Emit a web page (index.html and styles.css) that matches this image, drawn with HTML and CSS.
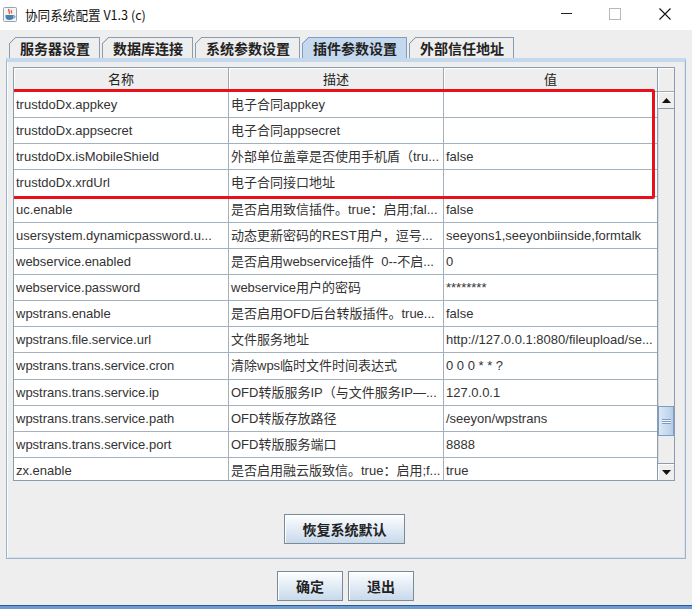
FILE: index.html
```html
<!DOCTYPE html>
<html lang="zh-CN">
<head>
    <meta charset="UTF-8">
    <title>协同系统配置 V1.3 (c)</title>
    <link rel="stylesheet" href="styles.css">
</head>
<body>
    <div class="window">
        <div class="titlebar">
            <svg class="app-icon" width="14" height="15" viewBox="0 0 14 15">
                <rect x="0.5" y="0.5" width="13" height="14" rx="1" fill="#f4f4f4" stroke="#9aa4b0"/>
                <path d="M6 2 C4.5 4 8 5 6 7" stroke="#e2542a" stroke-width="1.4" fill="none"/>
                <path d="M8.5 3 C7.5 4.5 9.5 5 8.5 6.5" stroke="#e2542a" stroke-width="1.1" fill="none"/>
                <path d="M2.5 8 H10.5 V10 C10.5 12 9 13 6.5 13 C4 13 2.5 12 2.5 10 Z" fill="#4a7fb5"/>
                <path d="M10.5 8.6 C12.5 8.6 12.5 11 10.3 11" stroke="#4a7fb5" stroke-width="1" fill="none"/>
            </svg>
            <span class="title-text">协同系统配置 V1.3 (c)</span>
            <div class="controls">
                <span class="ctl ctl-min"></span>
                <span class="ctl ctl-max"></span>
                <svg class="ctl-close" width="12" height="12" viewBox="0 0 12 12">
                    <path d="M0.5 0.5 L11.5 11.5 M11.5 0.5 L0.5 11.5" stroke="#111" stroke-width="1.1"/>
                </svg>
            </div>
        </div>

        <div class="tabs">
            <div class="tab">服务器设置</div>
            <div class="tab">数据库连接</div>
            <div class="tab">系统参数设置</div>
            <div class="tab selected">插件参数设置</div>
            <div class="tab">外部信任地址</div>
        </div>

        <div class="panel">
            <div class="scroll">
                <div class="viewport">
                    <div class="row head">
                        <div class="cell">名称</div>
                        <div class="cell">描述</div>
                        <div class="cell">值</div>
                    </div>
                    <div class="row"><div class="cell">trustdoDx.appkey</div><div class="cell">电子合同appkey</div><div class="cell"></div></div>
                    <div class="row"><div class="cell">trustdoDx.appsecret</div><div class="cell">电子合同appsecret</div><div class="cell"></div></div>
                    <div class="row"><div class="cell">trustdoDx.isMobileShield</div><div class="cell">外部单位盖章是否使用手机盾（tru...</div><div class="cell">false</div></div>
                    <div class="row"><div class="cell">trustdoDx.xrdUrl</div><div class="cell">电子合同接口地址</div><div class="cell"></div></div>
                    <div class="row"><div class="cell">uc.enable</div><div class="cell">是否启用致信插件。true：启用;fal...</div><div class="cell">false</div></div>
                    <div class="row"><div class="cell">usersystem.dynamicpassword.u...</div><div class="cell">动态更新密码的REST用户，逗号...</div><div class="cell">seeyons1,seeyonbiinside,formtalk</div></div>
                    <div class="row"><div class="cell">webservice.enabled</div><div class="cell">是否启用webservice插件&nbsp;&nbsp;0--不启...</div><div class="cell">0</div></div>
                    <div class="row"><div class="cell">webservice.password</div><div class="cell">webservice用户的密码</div><div class="cell">********</div></div>
                    <div class="row"><div class="cell">wpstrans.enable</div><div class="cell">是否启用OFD后台转版插件。true...</div><div class="cell">false</div></div>
                    <div class="row"><div class="cell">wpstrans.file.service.url</div><div class="cell">文件服务地址</div><div class="cell">http://127.0.0.1:8080/fileupload/se...</div></div>
                    <div class="row"><div class="cell">wpstrans.trans.service.cron</div><div class="cell">清除wps临时文件时间表达式</div><div class="cell">0 0 0 * * ?</div></div>
                    <div class="row"><div class="cell">wpstrans.trans.service.ip</div><div class="cell">OFD转版服务IP（与文件服务IP—...</div><div class="cell">127.0.0.1</div></div>
                    <div class="row"><div class="cell">wpstrans.trans.service.path</div><div class="cell">OFD转版存放路径</div><div class="cell">/seeyon/wpstrans</div></div>
                    <div class="row"><div class="cell">wpstrans.trans.service.port</div><div class="cell">OFD转版服务端口</div><div class="cell">8888</div></div>
                    <div class="row"><div class="cell">zx.enable</div><div class="cell">是否启用融云版致信。true：启用;f...</div><div class="cell">true</div></div>

                    <!-- highlight drawn over the first four rows -->
                    <div class="highlight"></div>
                </div>
                <div class="scrollbar">
                    <div class="sb-corner"></div>
                    <div class="sb-btn">
                        <svg width="9" height="5" viewBox="0 0 9 5"><polygon points="0,5 9,5 4.5,0" fill="#111"/></svg>
                    </div>
                    <div class="sb-track">
                        <div class="sb-thumb">
                            <span class="grip"></span>
                        </div>
                    </div>
                    <div class="sb-btn down">
                        <svg width="9" height="5" viewBox="0 0 9 5"><polygon points="0,0 9,0 4.5,5" fill="#111"/></svg>
                    </div>
                </div>
            </div>

            <div class="panel-actions">
                <button class="btn btn-reset">恢复系统默认</button>
            </div>
        </div>

        <div class="actions">
            <button class="btn btn-small">确定</button>
            <button class="btn btn-small">退出</button>
        </div>

        <div class="frame-bottom"></div>
    </div>
</body>
</html>
```

FILE: styles.css
```css
body {
    margin: 0;
    background-color: #eeeeee;
    font-family: "Liberation Sans", Arial, "Noto Sans CJK SC", sans-serif;
    color: #333;
}
.window {
    width: 692px;
    height: 609px;
    overflow: hidden;
    display: flex;
    flex-direction: column;
}

/* title bar */
.titlebar {
    height: 30px;
    background-color: #fff;
    display: flex;
    align-items: center;
    padding-left: 3px;
    flex-shrink: 0;
}
.app-icon {
    margin-top: -1px;
}
.title-text {
    margin-left: 8px;
    font-family: "Noto Sans CJK SC", "Liberation Sans", sans-serif;
    font-size: 12.6px;
    color: #111;
    margin-top: -2px;
}
.controls {
    margin-left: auto;
    display: flex;
    align-items: center;
    margin-top: -3px;
}
.ctl-min {
    width: 11px;
    height: 1px;
    background-color: #222;
    margin-right: 37px;
}
.ctl-max {
    width: 10px;
    height: 10px;
    border: 1px solid #b8b8b8;
    margin-right: 38px;
}
.ctl-close {
    margin-right: 21px;
}

/* tabs */
.tabs {
    display: flex;
    gap: 2px;
    margin-top: 7px;
    padding-left: 9px;
    height: 21px;
    flex-shrink: 0;
}
.tab {
    position: relative;
    padding: 0 9px 0 10px;
    border: 1px solid #8a9cb0;
    border-bottom: none;
    background-color: #eeeeee;
    font-family: "Noto Sans CJK SC", sans-serif;
    font-weight: bold;
    font-size: 14px;
    line-height: 20px;
    color: #222;
    white-space: nowrap;
}
.tab::before {
    content: "";
    position: absolute;
    top: -1px;
    left: -1px;
    width: 7px;
    height: 7px;
    background: linear-gradient(to bottom right, #eeeeee calc(50% - 0.8px), #8a9cb0 50%, transparent calc(50% + 0.8px));
}
.tab.selected {
    background-color: #c5d9ee;
    border-color: #7d9cc6;
}
.tab.selected::before {
    background: linear-gradient(to bottom right, #eeeeee calc(50% - 0.8px), #7d9cc6 50%, transparent calc(50% + 0.8px));
}

/* content panel */
.panel {
    margin-left: 6px;
    width: 680px;
    height: 501px;
    box-sizing: border-box;
    border: 1px solid #9fb4cc;
    border-top: 4px solid #c5d9ee;
    box-shadow: inset 1px 0 0 #f8fbff, inset -1px -1px 0 #d6e2ee;
    padding: 5px 0 0 6px;
    flex-shrink: 0;
}
.scroll {
    width: 662px;
    height: 414px;
    box-sizing: border-box;
    border: 1px solid #8c9cad;
    display: flex;
    overflow: hidden;
}
.viewport {
    position: relative;
    width: 644px;
    overflow: hidden;
    background-color: #fff;
}
.row {
    display: grid;
    grid-template-columns: 215px 215px 214px;
    height: 26.15px;
    box-sizing: border-box;
    border-bottom: 1px solid #a3b0bd;
}
.cell {
    border-right: 1px solid #a3b0bd;
    padding-left: 2px;
    font-size: 13px;
    line-height: 25px;
    white-space: nowrap;
    overflow: hidden;
}
.row.head {
    height: 24px;
    background-color: #eeeeee;
    border-bottom: 1px solid #a0a8b0;
}
.row.head .cell {
    text-align: center;
    line-height: 23px;
    padding-left: 0;
    color: #222;
    border-right-color: #a0a8b0;
    box-shadow: inset 1px 1px 0 #fff;
}
.highlight {
    position: absolute;
    left: -3px;
    top: 21px;
    width: 644px;
    height: 110px;
    box-sizing: border-box;
    border: 3px solid #e8101a;
    border-radius: 2px;
}

/* scrollbar */
.scrollbar {
    width: 16px;
    display: flex;
    flex-direction: column;
    background-color: #eeeeee;
    border-left: 1px solid #8c9cad;
}
.sb-corner {
    height: 24px;
    box-sizing: border-box;
    border-bottom: 1px solid #a0a8b0;
    box-shadow: inset 1px 1px 0 #fff;
}
.sb-btn {
    height: 17px;
    box-sizing: border-box;
    border-bottom: 1px solid #8c9cad;
    box-shadow: inset 1px 1px 0 #fff;
    display: flex;
    align-items: center;
    justify-content: center;
    flex-shrink: 0;
}
.sb-btn.down {
    border-bottom: none;
    border-top: 1px solid #8c9cad;
}
.sb-track {
    flex: 1;
    box-shadow: inset 1px 0 0 #dadada;
}
.sb-thumb {
    margin-top: 297px;
    height: 30px;
    box-sizing: border-box;
    border: 1px solid #7d9cc6;
    background: linear-gradient(to right, #dbe8f5, #c5d9ee 60%, #b6cce4);
    display: flex;
    align-items: center;
    justify-content: center;
}
.grip {
    width: 9px;
    height: 5px;
    background: repeating-linear-gradient(to bottom, #7d9cc6 0, #7d9cc6 1px, #eef4fb 1px, #eef4fb 2px);
}

/* buttons */
.btn {
    font-family: "Noto Sans CJK SC", sans-serif;
    font-weight: bold;
    font-size: 14px;
    color: #222;
    height: 30px;
    padding: 0;
    border: 1px solid #7a8a99;
    background: linear-gradient(to bottom, #ffffff 0%, #eaf1f8 35%, #dde8f3 60%, #c8d9eb 100%);
    box-shadow: inset 1px 1px 0 #fff;
}
.panel-actions {
    display: flex;
    justify-content: center;
    margin-top: 33px;
    padding-right: 9px;
}
.btn-reset {
    width: 121px;
}
.actions {
    display: flex;
    justify-content: center;
    gap: 5px;
    margin-top: 12px;
    padding-right: 1px;
}
.btn-small {
    width: 66px;
}
.frame-bottom {
    margin-top: auto;
    height: 3px;
    border-top: 1px solid #2a5a98;
    background-color: #6b9bd2;
}
```
